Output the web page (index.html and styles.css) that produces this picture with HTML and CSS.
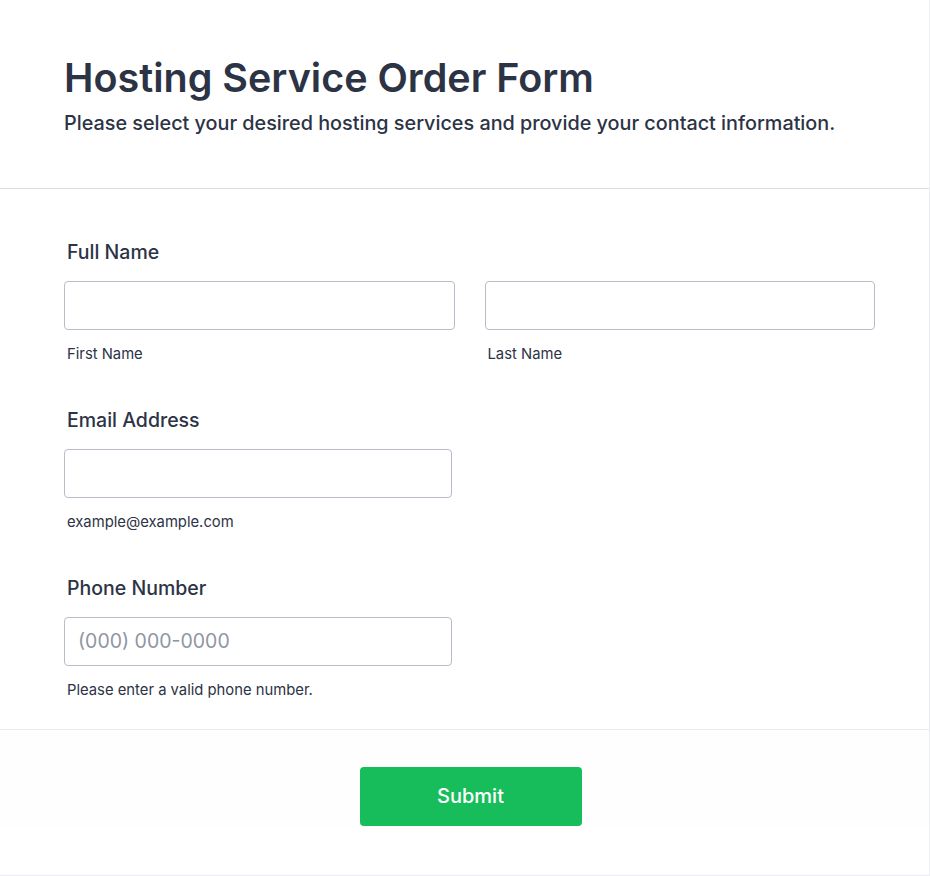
FILE: index.html
```html
<!DOCTYPE html>
<html lang="en">
<head>
<meta charset="utf-8">
<title>Hosting Service Order Form</title>
<link rel="stylesheet" href="styles.css">
</head>
<body>
<form class="card">
  <header class="header">
    <h1 class="title">Hosting Service Order Form</h1>
    <p class="subtitle">Please select your desired hosting services and provide your contact information.</p>
  </header>
  <section class="fields">
    <div class="field">
      <label class="label">Full Name</label>
      <div class="row two">
        <div class="sub">
          <input class="input" type="text">
          <span class="hint">First Name</span>
        </div>
        <div class="sub">
          <input class="input" type="text">
          <span class="hint">Last Name</span>
        </div>
      </div>
    </div>
    <div class="field">
      <label class="label">Email Address</label>
      <div class="row one">
        <div class="sub">
          <input class="input" type="email">
          <span class="hint">example@example.com</span>
        </div>
      </div>
    </div>
    <div class="field">
      <label class="label">Phone Number</label>
      <div class="row one">
        <div class="sub">
          <input class="input" type="tel" placeholder="(000) 000-0000">
          <span class="hint">Please enter a valid phone number.</span>
        </div>
      </div>
    </div>
  </section>
  <footer class="footer">
    <button class="submit" type="button">Submit</button>
  </footer>
</form>
</body>
</html>
```
FILE: styles.css
```css
* { box-sizing: border-box; }
html, body { margin: 0; padding: 0; background: #ffffff; }
body {
  font-family: Inter, "Noto Sans", sans-serif;
  color: #2c3345;
}
.card {
  width: 930px;
  height: 876px;
  border-right: 1px solid #eceef3;
  border-bottom: 1px solid #eceef3;
  background: #fff;
}
.header {
  padding: 54px 64px 0 64px;
  height: 189px;
  border-bottom: 1px solid #dcdde5;
}
.title {
  margin: 0;
  font-size: 39.5px;
  line-height: 48px;
  font-weight: 600;
  color: #2c3345;
}
.subtitle {
  margin: 8px 0 0 0;
  font-size: 19.8px;
  line-height: 26px;
  font-weight: 500;
  color: #2c3345;
}
.fields {
  padding: 50px 54px 29px 64px;
  border-bottom: 1px solid #e9e9ef;
  box-shadow: 0 1px 2px rgba(220, 221, 235, 0.5);
  display: flex;
  flex-direction: column;
  gap: 43.5px;
}
.field {
  display: flex;
  flex-direction: column;
}
.label {
  font-size: 19.5px;
  line-height: 26px;
  font-weight: 500;
  padding-left: 3px;
  margin-bottom: 15.5px;
  color: #2c3345;
}
.row { display: flex; gap: 30px; }
.row.two .sub { width: 391px; }
.row.one .sub { width: 388px; }
.sub { display: flex; flex-direction: column; }
.input {
  height: 49px;
  width: 100%;
  border: 1px solid #b8bdc9;
  border-radius: 4px;
  padding: 0 13px;
  font-family: Inter, sans-serif;
  font-size: 19.5px;
  color: #2c3345;
  background: #fff;
}
.input::placeholder { color: #8f96a3; }
.hint {
  margin-top: 14px;
  padding-left: 3px;
  font-size: 14.8px;
  line-height: 20px;
  color: #2c3345;
}
.footer {
  display: flex;
  justify-content: center;
  padding: 37px 0 0 12px;
  background: #fefefe;
}
.submit {
  width: 222px;
  height: 59px;
  border: none;
  border-radius: 4px;
  background: #18bd5b;
  color: #fff;
  font-family: Inter, sans-serif;
  font-size: 20px;
  font-weight: 500;
}
```
